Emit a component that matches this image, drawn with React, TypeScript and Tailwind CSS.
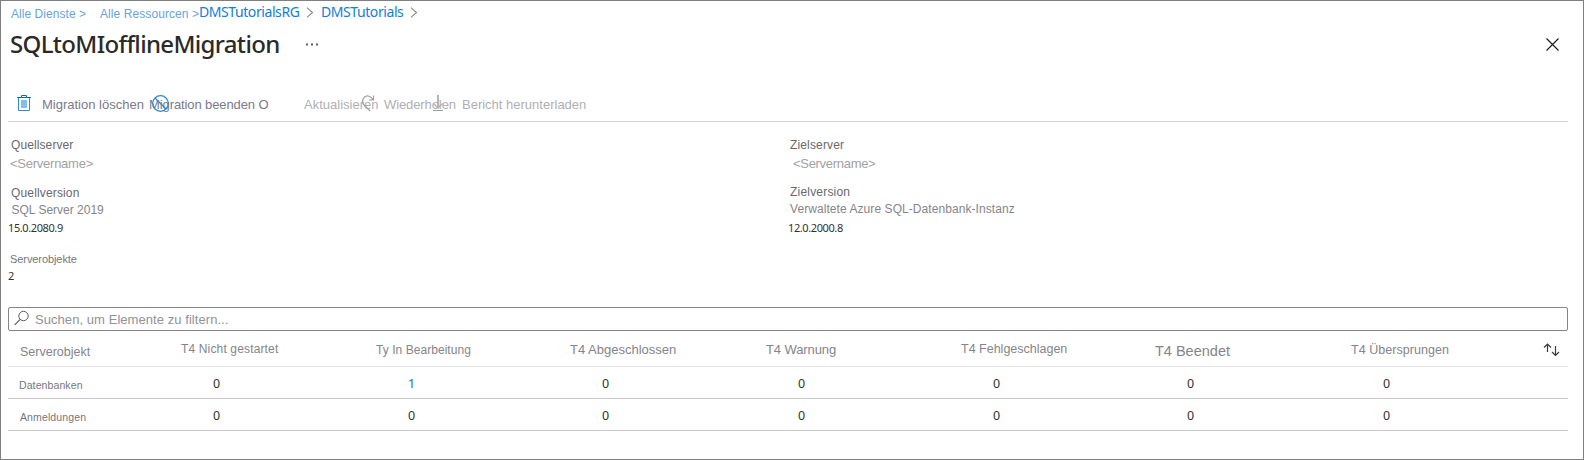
const columns = [
  { label: 'Serverobjekt', style: 'pl-[12px] pt-[17px] text-[12.5px]' },
  { label: 'T4 Nicht gestartet', style: 'pt-[14px] text-[12px] tracking-[0.15px]' },
  { label: 'Ty In Bearbeitung', style: 'pt-[15px] text-[12px] tracking-[0.05px]' },
  { label: 'T4 Abgeschlossen', style: 'pt-[15px] text-[13px]' },
  { label: 'T4 Warnung', style: 'pt-[15px] text-[13px] tracking-[-0.1px]' },
  { label: 'T4 Fehlgeschlagen', style: 'pt-[14px] text-[12.5px]' },
  { label: 'T4 Beendet', style: 'pt-[16px] text-[14.5px]' },
  { label: 'T4 Übersprungen', style: 'pt-[15px] text-[12.5px] tracking-[0.05px]' },
];

const rows = [
  { name: 'Datenbanken', style: 'pl-[11px] tracking-[0.1px]', values: [0, 1, 0, 0, 0, 0, 0] },
  { name: 'Anmeldungen', style: 'pl-[12px] tracking-[0.12px]', values: [0, 0, 0, 0, 0, 0, 0] },
];

const gridCols = 'grid grid-cols-[173px_195px_194px_196px_195px_194px_196px_192px_1fr]';
const segoe = "font-['Noto_Sans','Open_Sans',sans-serif]";

function Chevron() {
  return (
    <svg className="mt-[6px] h-[11px] w-[8px]" viewBox="0 0 8 11" fill="none" stroke="#8a8886" strokeWidth="1.1">
      <path d="M1 .7l5.500 4.800L1 10.300" />
    </svg>
  );
}

function Toolbar() {
  return (
    <div className="relative ml-[7px] mr-[15px] mt-[31px] flex h-[31px] border-b border-[#d2d2d4] pl-[34px] pt-[6px] text-[13px] text-[#7b7a8c]">
      <svg className="absolute left-[9px] top-[4px] h-[17px] w-[14px]" viewBox="0 0 14 17" fill="none">
        <path d="M1.500 3v12.500h11V3" stroke="#2d8ad8" />
        <path d="M0 2.500h14M4.500 2V0.500h5V2" stroke="#0f6cbd" />
        <path d="M4 5h6v8H4z" fill="#83bdea" />
      </svg>
      <span className="w-[107px]">Migration löschen</span>
      <span className="w-[155px] tracking-[-0.1px]">Migration beenden O</span>
      <div className="flex text-[#b0afb3]">
        <span className="w-[80px]">Aktualisieren</span>
        <span className="w-[78px] tracking-[-0.1px]">Wiederholen</span>
        <span>Bericht herunterladen</span>
      </div>
      <svg className="absolute left-[144px] top-[4px] h-[17px] w-[17px]" viewBox="0 0 17 17" fill="none" stroke="#2d8ad8" strokeWidth="1.2">
        <circle cx="8.5" cy="8.5" r="7.8" />
        <path d="M3 3l11 11" />
      </svg>
      <svg className="absolute left-[354px] top-[4px] h-[17px] w-[13px]" viewBox="0 0 13 17" fill="none" stroke="#a19f9d" strokeWidth="1.2">
        <path d="M11.500 0.500v4.500H7M11 5C9.500 1.200 5 -0.300 2.300 2.300C0 4.800 0.300 8 2.500 10.500L8 16" />
      </svg>
      <svg className="absolute left-[424px] top-[4px] h-[17px] w-[12px]" viewBox="0 0 12 17" fill="none" stroke="#b5b3b1">
        <path d="M6 0v13" strokeWidth="2" />
        <path d="M1.500 8.500L6 13l4.500-4.500" strokeWidth="1.300" />
        <path d="M1 15.500h10" stroke="#a19f9d" />
      </svg>
    </div>
  );
}

export default function App() {
  return (
    <div className="flex h-[460px] w-[1584px] flex-col overflow-hidden whitespace-nowrap border border-[#7f7f7f] bg-white font-['Liberation_Sans',Arial,sans-serif] leading-4 text-[#77767b]">
      <nav className="flex h-[27px] pl-[10px] text-[#1180d8]">
        <span className="w-[89px] pt-[5px] text-[12px] tracking-[0.05px] text-[#69a3dc]">Alle Dienste &gt;</span>
        <span className="w-[99px] pt-[5px] text-[12px] tracking-[0.08px] text-[#69a3dc]">Alle Ressourcen &gt;</span>
        <span className={`${segoe} w-[107px] pt-[3px] text-[14px] tracking-[-0.42px]`}>DMSTutorialsRG</span>
        <Chevron />
        <span className={`${segoe} ml-[7px] w-[89px] pt-[3px] text-[14px] tracking-[-0.42px]`}>DMSTutorials</span>
        <Chevron />
      </nav>

      <header className="flex h-[32px] items-start pl-[10px]">
        <div className="w-[294px]">
          <h1 className={`${segoe} -ml-[1px] text-[24px] font-medium leading-8 tracking-[-0.67px] text-[#2b2a29]`}>SQLtoMIofflineMigration</h1>
        </div>
        <svg className="mt-[15px] h-[3px] w-[14px]" viewBox="0 0 14 3" fill="#605e5c">
          <path d="M1 .5h2v2H1zM6 .5h2v2H6zM11 .5h2v2h-2z" />
        </svg>
        <svg className="ml-auto mr-[24px] mt-[10px] h-[13px] w-[13px]" viewBox="0 0 13 13" stroke="#201f1e" strokeWidth="1.2">
          <path d="M.5 .5l12 12M12.500 .5l-12 12" />
        </svg>
      </header>

      <Toolbar />

      <section className="flex h-[185px] text-[12px] text-[#85848a]">
        <div className="flex w-[779px] flex-col pl-[9px]">
          <span className="mt-[15px] pl-px tracking-[0.1px] text-[#69686d]">Quellserver</span>
          <span className="mt-[3px] text-[13px] tracking-[-0.25px] text-[#a2a1a6]">&lt;Servername&gt;</span>
          <span className="mt-[13px] pl-px tracking-[0.15px] text-[#69686d]">Quellversion</span>
          <span className="mt-[1px] pl-[1.5px]">SQL Server 2019</span>
          <span className={`${segoe} mt-[2px] -ml-[2px] text-[11px] tracking-[-0.4px] text-[#323130]`}>15.0.2080.9</span>
          <span className="mt-[15px] text-[11px] tracking-[-0.08px] text-[#77767b]">Serverobjekte</span>
          <span className={`${segoe} mt-[1px] -ml-[2px] text-[11px] text-[#323130]`}>2</span>
        </div>
        <div className="flex flex-col pl-[10px]">
          <span className="mt-[15px] tracking-[0.15px] text-[#69686d]">Zielserver</span>
          <span className="mt-[3px] pl-[3px] text-[13px] tracking-[-0.3px] text-[#a2a1a6]">&lt;Servername&gt;</span>
          <span className="mt-[12px] tracking-[0.2px] text-[#69686d]">Zielversion</span>
          <span className="mt-[1px] tracking-[0.07px]">Verwaltete Azure SQL-Datenbank-Instanz</span>
          <span className={`${segoe} -ml-[2px] mt-[3px] text-[11px] tracking-[-0.4px] text-[#323130]`}>12.0.2000.8</span>
        </div>
      </section>

      <div className="ml-[7px] mr-[15px] flex h-[24px] shrink-0 rounded-[2px] border border-[#858488] pl-[5px]">
        <svg className="mt-[2px] h-[16px] w-[16px]" viewBox="0 0 16 16" fill="none" stroke="#605e5c">
          <circle cx="9.500" cy="6" r="4.700" />
          <path d="M6.200 9.400L.7 14.900" strokeWidth="1.200" />
        </svg>
        <span className="ml-[5px] pt-[4px] text-[13px] tracking-[0.06px] text-[#929197]">Suchen, um Elemente zu filtern...</span>
      </div>

      <div className="ml-[7px] mr-[15px]">
        <div className={`${gridCols} h-[39px] border-b border-[#e8e8e8] -mt-[4px] box-content text-[#85848a]`}>
          {columns.map((c) => (
            <span key={c.label} className={c.style}>{c.label}</span>
          ))}
          <svg className="mt-[16px] h-[14px] w-[17px]" viewBox="0 0 17 14" fill="none" stroke="#3b3a39" strokeWidth="1.200">
            <path d="M4.500 9V1M1 4.500L4.500 1L8 4.500M12.500 3v9.500M9 9l3.500 3.500L16 9" />
          </svg>
        </div>
        {rows.map((r) => (
          <div key={r.name} className={`${gridCols} h-[32px] border-b border-[#c8c8ca]`}>
            <span className={`${r.style} pt-[10px] text-[10.5px] text-[#77767b]`}>{r.name}</span>
            {r.values.map((v, i) => (
              <span key={i} className={`${segoe} pl-[32px] pt-[9px] text-[12.5px] ${v ? 'text-[#106ebe]' : 'text-[#323130]'}`}>{v}</span>
            ))}
          </div>
        ))}
      </div>
    </div>
  );
}
